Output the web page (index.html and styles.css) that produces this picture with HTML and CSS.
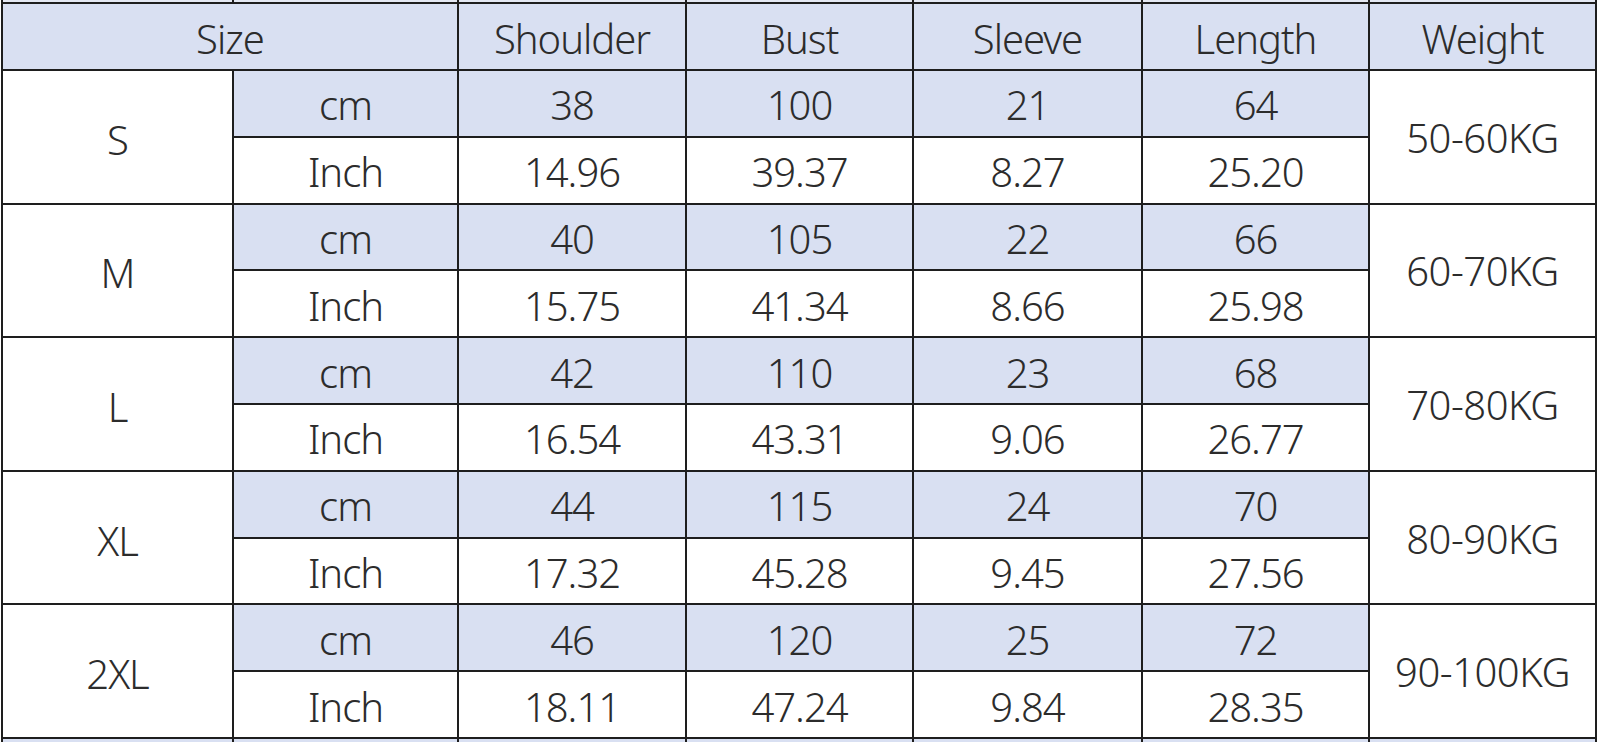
FILE: index.html
```html
<!DOCTYPE html>
<html lang="en">
<head>
<meta charset="utf-8">
<title>Size Chart</title>
<link rel="stylesheet" href="styles.css">
</head>
<body>
<div class="chart">
  <div class="c stub"></div><div class="c stub"></div><div class="c stub"></div><div class="c stub"></div><div class="c stub"></div><div class="c stub"></div><div class="c stub"></div>

  <div class="c blue span2">Size</div>
  <div class="c blue">Shoulder</div>
  <div class="c blue">Bust</div>
  <div class="c blue">Sleeve</div>
  <div class="c blue">Length</div>
  <div class="c blue">Weight</div>

  <div class="c size">S</div>
  <div class="c blue">cm</div><div class="c blue">38</div><div class="c blue">100</div><div class="c blue">21</div><div class="c blue">64</div>
  <div class="c weight">50-60KG</div>
  <div class="c">Inch</div><div class="c">14.96</div><div class="c">39.37</div><div class="c">8.27</div><div class="c">25.20</div>

  <div class="c size">M</div>
  <div class="c blue">cm</div><div class="c blue">40</div><div class="c blue">105</div><div class="c blue">22</div><div class="c blue">66</div>
  <div class="c weight">60-70KG</div>
  <div class="c">Inch</div><div class="c">15.75</div><div class="c">41.34</div><div class="c">8.66</div><div class="c">25.98</div>

  <div class="c size">L</div>
  <div class="c blue">cm</div><div class="c blue">42</div><div class="c blue">110</div><div class="c blue">23</div><div class="c blue">68</div>
  <div class="c weight">70-80KG</div>
  <div class="c">Inch</div><div class="c">16.54</div><div class="c">43.31</div><div class="c">9.06</div><div class="c">26.77</div>

  <div class="c size">XL</div>
  <div class="c blue">cm</div><div class="c blue">44</div><div class="c blue">115</div><div class="c blue">24</div><div class="c blue">70</div>
  <div class="c weight">80-90KG</div>
  <div class="c">Inch</div><div class="c">17.32</div><div class="c">45.28</div><div class="c">9.45</div><div class="c">27.56</div>

  <div class="c size">2XL</div>
  <div class="c blue">cm</div><div class="c blue">46</div><div class="c blue">120</div><div class="c blue">25</div><div class="c blue">72</div>
  <div class="c weight">90-100KG</div>
  <div class="c">Inch</div><div class="c">18.11</div><div class="c">47.24</div><div class="c">9.84</div><div class="c">28.35</div>

  <div class="c blue"></div><div class="c blue"></div><div class="c blue"></div><div class="c blue"></div><div class="c blue"></div><div class="c blue"></div><div class="c blue"></div>
</div>
</body>
</html>
```

FILE: styles.css
```css
html, body {
  margin: 0;
  padding: 0;
  background: #ffffff;
  height: 742px;
  overflow: hidden;
}

.chart {
  margin-left: 1px;
  width: 1596px;
  box-sizing: border-box;
  padding: 0 2px;
  display: grid;
  grid-template-columns: 229px 223px 226px 225px 227px 225px 225px;
  grid-template-rows: 2px 65px repeat(10, 64.8px) 20px;
  gap: 2px;
  background: #1e1e1e;
  font-family: "Noto Sans", "Open Sans", sans-serif;
  font-size: 40px;
  font-weight: 350;
  letter-spacing: -1px;
  color: #2c2c2c;
}

.c {
  background: #ffffff;
  display: flex;
  align-items: center;
  justify-content: center;
  padding-top: 4px;
  box-sizing: border-box;
  white-space: nowrap;
  line-height: 1;
}

.stub {
  background: #e4e8f3;
  padding: 0;
}

.blue {
  background: #d9e0f2;
}

.span2 {
  grid-column: span 2;
}

.size {
  grid-row: span 2;
  padding-top: 6px;
}

.weight {
  grid-row: span 2;
  padding-top: 2px;
  letter-spacing: -0.5px;
}
```
